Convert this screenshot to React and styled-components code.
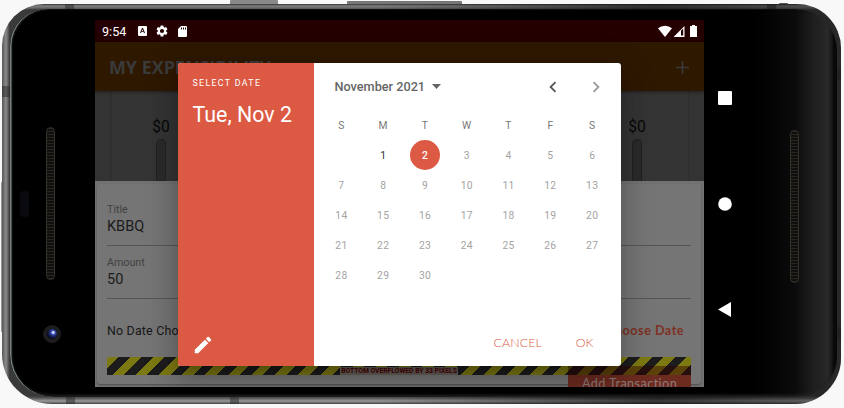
import React from "react";
import styled, { createGlobalStyle } from "styled-components";

const Global = createGlobalStyle`
  * { box-sizing: border-box; }
  html, body { margin: 0; padding: 0; background: #f8f8f8; }
  body { font-family: Roboto, "Liberation Sans", sans-serif; overflow: hidden; }
`;

const Stage = styled.div`
  position: relative;
  width: 844px;
  height: 408px;
  padding: 4px 3px 4px 2px;
  background: #f8f8f8;
  overflow: hidden;
`;

const SideKey = styled.span`
  position: absolute;
  left: ${(p) => p.$x}px;
  top: ${(p) => p.$y}px;
  width: ${(p) => p.$w}px;
  height: ${(p) => p.$h}px;
  border-radius: 1px;
  background: ${(p) => p.$tone};
`;

const Casing = styled.div`
  position: relative;
  width: 839px;
  height: 400px;
  padding: 5px 4px 7px 8px;
  border-radius: 42px 44px 46px 50px;
  background:
    linear-gradient(90deg, #555 0, #8c8c8c 4px, #333 8px, transparent 9px),
    linear-gradient(180deg, #333 0, #808080 2px, #666 4px, transparent 6px),
    linear-gradient(0deg, #444 0, #999 3px, #555 6px, transparent 8px),
    #3a3a3a;
  &::after {
    content: "";
    position: absolute;
    inset: 0;
    border-radius: inherit;
    background: linear-gradient(90deg, transparent 45%, rgba(0, 0, 0, 0.62) 78%, rgba(0, 0, 0, 0.3) 100%);
    z-index: 0;
  }
`;

const AntennaBand = styled.span`
  position: absolute;
  left: ${(p) => p.$x}px;
  top: ${(p) => p.$y}px;
  width: ${(p) => p.$w}px;
  height: ${(p) => p.$h}px;
  background: rgba(40, 40, 40, 0.5);
`;

const Glass = styled.div`
  position: relative;
  z-index: 1;
  display: flex;
  align-items: flex-start;
  width: 827px;
  height: 388px;
  padding-top: 11px;
  border-radius: 37px 42px 40px 42px;
  background: linear-gradient(90deg, transparent 745px, #0b0b0b 785px, #1b1b1b 800px, #292929 818px, #171717 822px, #080808 824px), #000;
  box-shadow: inset 1.5px 0 0 #75807f, inset 3px 1px 1px #111, inset 0 -4px 3px -2px #222;
`;

const LeftBezel = styled.div`
  position: relative;
  flex: none;
  width: 85px;
  height: 367px;
`;

const Speaker = styled.span`
  position: absolute;
  left: ${(p) => p.$x}px;
  top: ${(p) => p.$y}px;
  width: 9px;
  height: 153px;
  border: 1px solid #34312c;
  border-radius: 5px;
  background: repeating-linear-gradient(180deg, #29251f 0 1px, #100f0d 1px 3px);
`;

const Sensor = styled.span`
  position: absolute;
  left: 10px;
  top: 171px;
  width: 9px;
  height: 26px;
  border-radius: 4px;
  background: #090a10;
`;

const Camera = styled.span`
  position: absolute;
  left: 33px;
  top: 305px;
  width: 18px;
  height: 18px;
  border: 4px solid #1d1d1f;
  border-radius: 50%;
  background: radial-gradient(circle at 62% 35%, #cfd6ff 0 1px, #3d50b5 2px, #1b2560 4px, #080b22 6px);
`;

const Screen = styled.div`
  position: relative;
  flex: none;
  display: flex;
  flex-direction: column;
  width: 609px;
  height: 367px;
  overflow: hidden;
  background: #333;
`;

const StatusBar = styled.div`
  flex: none;
  display: flex;
  align-items: center;
  justify-content: space-between;
  height: 22px;
  padding: 0 7px 0 7px;
  background: #240000;
  color: #fff;
  font-size: 12.6px;
`;

const StatusGroup = styled.div`
  display: flex;
  align-items: center;
  gap: ${(p) => p.$gap}px;
`;

const Clock = styled.span`
  width: 27px;
`;

const AppBar = styled.div`
  flex: none;
  position: relative;
  display: flex;
  align-items: center;
  justify-content: space-between;
  height: 49px;
  padding: 1px 15px 0 14px;
  background: #2e1800;
  color: #3b3a3a;
  box-shadow: 0 1px 3px rgba(0, 0, 0, 0.45);
  z-index: 1;
`;

const AppTitle = styled.h1`
  margin: 0;
  font: 700 17.9px "Open Sans", sans-serif;
  white-space: nowrap;
`;

const Chart = styled.div`
  flex: none;
  display: flex;
  justify-content: space-between;
  height: 90px;
  margin: 0 15px;
  padding: 27px 29px 0 27px;
  border-left: 2px solid #2f2f2f;
  border-right: 1px solid #2e2e2e;
  background: #343434;
`;

const ChartDay = styled.div`
  display: flex;
  flex-direction: column;
  align-items: center;
  width: 44px;
  color: #080808;
  font-size: 15.6px;
  line-height: 19px;
`;

const ChartTrack = styled.span`
  width: 10px;
  height: 60px;
  margin-top: 2px;
  border: 1px solid #202020;
  border-bottom: 0;
  border-radius: 5px 5px 0 0;
  background: #2a2a2a;
`;

const Sheet = styled.div`
  flex: none;
  height: 206px;
  padding: 3px 3px 3px 2px;
  background: #727272;
`;

const FormCard = styled.div`
  height: 200px;
  padding: 18px 10px 0;
  border-radius: 3px;
  background: #757575;
  box-shadow: 0 1px 2px rgba(0, 0, 0, 0.35);
`;

const Field = styled.div`
  height: ${(p) => p.$height}px;
  padding-top: ${(p) => p.$top}px;
  border-bottom: 1px solid #555;
`;

const Label = styled.div`
  color: #414141;
  font-size: 10.7px;
  line-height: 15px;
`;

const Value = styled.div`
  color: #1b1b1b;
  font-size: 14.5px;
  line-height: 20px;
`;

const DateRow = styled.div`
  display: flex;
  align-items: center;
  justify-content: space-between;
  height: 58px;
  padding: 4px 7px 0 0;
  color: #171717;
  font-size: 12.4px;
  letter-spacing: 0.2px;
`;

const ChooseDate = styled.span`
  color: #7e3023;
  font: 700 12.6px Lato, sans-serif;
  letter-spacing: 0.5px;
`;

const Overflow = styled.div`
  position: relative;
  z-index: 2;
  display: flex;
  align-items: flex-end;
  justify-content: center;
  height: 18px;
  border-radius: 2px 0 0 0;
  background:
    linear-gradient(rgba(50, 0, 0, 0.45), rgba(50, 0, 0, 0.45)) right bottom / 123px 9px no-repeat,
    repeating-linear-gradient(135deg, #7c7812 0 8.2px, #1c1c1c 8.2px 16.4px);
`;

const OverflowText = styled.span`
  padding: 0 1px;
  background: #66605a;
  color: #480303;
  font-size: 6.75px;
  font-weight: 700;
  line-height: 8px;
  white-space: nowrap;
`;

const AddButton = styled.div`
  width: 123px;
  height: 12px;
  margin-left: auto;
  background: #6d2b20;
  color: #8c7a77;
  font: 400 12.7px/16px Lato, sans-serif;
  letter-spacing: 0.4px;
  text-align: center;
`;

const Dialog = styled.div`
  position: absolute;
  z-index: 5;
  left: 83px;
  top: 43px;
  display: flex;
  width: 442.5px;
  height: 303px;
  border-radius: 3px;
  overflow: hidden;
  background: #fff;
`;

const DialogShadow = styled.div`
  position: absolute;
  z-index: 4;
  left: 83px;
  top: 43px;
  width: 442px;
  height: 303px;
  border-radius: 3px;
  box-shadow: 0 8px 11px -5px rgba(0, 0, 0, 0.2), 0 17px 27px 2px rgba(0, 0, 0, 0.14), 0 6px 33px 6px rgba(0, 0, 0, 0.12);
`;

const DatePanel = styled.div`
  flex: none;
  display: flex;
  flex-direction: column;
  width: 136px;
  padding: 14px 14px 10px 14.5px;
  background: #dc5a44;
  color: #fff;
`;

const PanelLabel = styled.div`
  font-size: 8.8px;
  line-height: 12px;
  letter-spacing: 1.35px;
`;

const PanelDate = styled.div`
  margin-top: 11px;
  font-size: 21.4px;
  line-height: 30px;
  white-space: nowrap;
`;

const PanelEdit = styled.div`
  display: flex;
  margin: auto 0 0 -1px;
`;

const Picker = styled.div`
  flex: 1;
  display: flex;
  flex-direction: column;
  padding: 5px 7px 0 6.5px;
`;

const MonthBar = styled.div`
  display: flex;
  align-items: center;
  height: 37px;
  padding: 0 7px 0 14px;
  color: #666;
`;

const Month = styled.span`
  flex: 1;
  display: flex;
  align-items: center;
  gap: 7px;
  font-size: 12.7px;
  font-weight: 500;
  white-space: nowrap;
`;

const Arrows = styled.span`
  display: flex;
  gap: 21px;
`;

const Calendar = styled.div`
  display: grid;
  grid-template-columns: repeat(7, 41.8px);
  grid-auto-rows: 30px;
  margin-top: 5px;
`;

const Day = styled.span`
  display: flex;
  align-items: center;
  justify-content: center;
  justify-self: center;
  width: 30px;
  height: 30px;
  border-radius: 50%;
  font-size: 10.3px;
  letter-spacing: 0.3px;
  background: ${(p) => (p.$kind === "selected" ? "#dc5a44" : "transparent")};
  color: ${(p) => ({ head: "#777", selected: "#fff", today: "#333", off: "#a3a3a3" })[p.$kind]};
  font-weight: ${(p) => (p.$kind === "selected" ? 500 : 400)};
`;

const Actions = styled.div`
  display: flex;
  justify-content: flex-end;
  gap: 34px;
  margin-top: auto;
  padding: 0 20px 15px 0;
  color: #dc5a44;
  font: 300 12.4px/16px Lato, sans-serif;
`;

const Action = styled.span`
  letter-spacing: ${(p) => p.$spacing}px;
`;

const NavColumn = styled.div`
  display: flex;
  flex-direction: column;
  align-items: center;
  justify-content: space-between;
  width: 42px;
  height: 300px;
  padding: 71px 0 3px;
  color: #fff;
`;

const Svg = styled.svg`
  display: block;
  flex: none;
  fill: ${(p) => p.$tone || "currentColor"};
`;

const Icon = ({ w, h = w, box = "0 0 24 24", tone, children }) => (
  <Svg width={w} height={h} viewBox={box} $tone={tone}>{children}</Svg>
);

const gear = "M19.14 12.94c.04-.3.06-.61.06-.94 0-.32-.02-.64-.07-.94l2.03-1.58a.49.49 0 0 0 .12-.61l-1.92-3.32a.49.49 0 0 0-.59-.22l-2.39.96c-.5-.38-1.03-.7-1.62-.94L14.4 2.81a.48.48 0 0 0-.48-.41h-3.84a.48.48 0 0 0-.47.41L9.25 5.35c-.59.24-1.13.57-1.62.94l-2.39-.96a.49.49 0 0 0-.59.22L2.74 8.87a.48.48 0 0 0 .12.61l2.03 1.58c-.05.3-.09.63-.09.94s.02.64.07.94l-2.03 1.58a.49.49 0 0 0-.12.61l1.92 3.32c.12.22.37.29.59.22l2.39-.96c.5.38 1.03.7 1.62.94l.36 2.54c.05.24.24.41.48.41h3.84c.24 0 .44-.17.47-.41l.36-2.54c.59-.24 1.13-.56 1.62-.94l2.39.96c.22.08.47 0 .59-.22l1.92-3.32a.48.48 0 0 0-.12-.61zM12 15.6a3.6 3.6 0 1 1 0-7.2 3.6 3.6 0 0 1 0 7.2z";

const week = ["S", "M", "T", "W", "T", "F", "S"];
const days = Array.from({ length: 30 }, (_, i) => i + 1);
const kindOf = (d) => (d === 1 ? "today" : d === 2 ? "selected" : "off");

export default function App() {
  return (
    <Stage>
      <Global />
      <SideKey $x={230} $y={0} $w={48} $h={5} $tone="#888" />
      <SideKey $x={347} $y={1} $w={115} $h={5} $tone="#777" />
      <SideKey $x={779} $y={3} $w={9} $h={3} $tone="#555" />
      <SideKey $x={1} $y={182} $w={3} $h={150} $tone="#999" />
      <Casing>
        <AntennaBand $x={63} $y={0} $w={9} $h={6} />
        <AntennaBand $x={765} $y={0} $w={9} $h={6} />
        <AntennaBand $x={64} $y={393} $w={9} $h={7} />
        <AntennaBand $x={228} $y={393} $w={9} $h={7} />
        <AntennaBand $x={0} $y={82} $w={8} $h={11} />
        <AntennaBand $x={835} $y={64} $w={4} $h={12} />
        <AntennaBand $x={835} $y={323} $w={4} $h={12} />
        <Glass>
          <LeftBezel>
            <Sensor />
            <Speaker $x={36} $y={107} />
            <Camera />
          </LeftBezel>
          <Screen>
            <StatusBar>
              <StatusGroup $gap={8.5}>
                <Clock>9:54</Clock>
                <Icon w={9} h={10} box="0 0 9 10">
                  <path fillRule="evenodd" d="M1 0h7a1 1 0 0 1 1 1v8a1 1 0 0 1-1 1H1a1 1 0 0 1-1-1V1a1 1 0 0 1 1-1zM4 2 2 7h1l.5-1.2h2L6 7h1L5 2zm.5 1.2L5.2 5H3.8z" />
                </Icon>
                <Icon w={14}><path fillRule="evenodd" d={gear} /></Icon>
                <Icon w={9} h={11} box="0 0 9 11">
                  <path fillRule="evenodd" d="M3 0h5a1 1 0 0 1 1 1v9a1 1 0 0 1-1 1H1a1 1 0 0 1-1-1V3zm0 1.5v2h1v-2zm2 0v2h1v-2zm2 0v2h1v-2z" />
                </Icon>
              </StatusGroup>
              <StatusGroup $gap={1}>
                <Icon w={14} h={12} box="0 0 13 11"><path d="M6.5 11 0 3a10 10 0 0 1 13 0z" /></Icon>
                <Icon w={12} h={11} box="0 0 11 11"><path fillRule="evenodd" d="M11 0v11H0zM7.5 4.8v4.8h2.2V2.6z" /></Icon>
                <Icon w={11} h={12} box="0 0 11 12"><path d="M6 0h3v1h2v11H4V1h2z" /></Icon>
              </StatusGroup>
            </StatusBar>
            <AppBar>
              <AppTitle>MY EXPENSIBILITY</AppTitle>
              <Icon w={13} box="0 0 13 13"><path d="M5.7 0h1.6v5.7H13v1.6H7.3V13H5.7V7.3H0V5.7h5.7z" /></Icon>
            </AppBar>
            <Chart>
              <ChartDay>$0<ChartTrack /></ChartDay>
              <ChartDay>$0<ChartTrack /></ChartDay>
            </Chart>
            <Sheet>
              <FormCard>
                <Field $height={44} $top={0}><Label>Title</Label><Value>KBBQ</Value></Field>
                <Field $height={53} $top={9}><Label>Amount</Label><Value>50</Value></Field>
                <DateRow>
                  <span>No Date Chosen!</span>
                  <ChooseDate>Choose Date</ChooseDate>
                </DateRow>
                <Overflow><OverflowText>BOTTOM OVERFLOWED BY 33 PIXELS</OverflowText></Overflow>
                <AddButton>Add Transaction</AddButton>
              </FormCard>
            </Sheet>
            <DialogShadow />
            <Dialog>
              <DatePanel>
                <PanelLabel>SELECT DATE</PanelLabel>
                <PanelDate>Tue, Nov 2</PanelDate>
                <PanelEdit>
                  <Icon w={22}><path d="M3 17.25V21h3.75L17.81 9.94l-3.75-3.75zM20.71 7.04a1 1 0 0 0 0-1.41l-2.34-2.34a1 1 0 0 0-1.41 0l-1.83 1.83 3.75 3.75z" /></Icon>
                </PanelEdit>
              </DatePanel>
              <Picker>
                <MonthBar>
                  <Month>
                    November 2021
                    <Icon w={9} h={5} box="0 0 9 5"><path d="M0 0h9L4.5 5z" /></Icon>
                  </Month>
                  <Arrows>
                    <Icon w={22} tone="#555"><path d="M15.41 7.41 14 6l-6 6 6 6 1.41-1.41L10.83 12z" /></Icon>
                    <Icon w={22} tone="#999"><path d="M8.59 16.59 13.17 12 8.59 7.41 10 6l6 6-6 6z" /></Icon>
                  </Arrows>
                </MonthBar>
                <Calendar>
                  {week.map((d, i) => <Day key={"h" + i} $kind="head">{d}</Day>)}
                  <Day $kind="head" />
                  {days.map((d) => <Day key={d} $kind={kindOf(d)}>{d}</Day>)}
                </Calendar>
                <Actions>
                  <Action $spacing={0.1}>CANCEL</Action>
                  <Action $spacing={0}>OK</Action>
                </Actions>
              </Picker>
            </Dialog>
          </Screen>
          <NavColumn>
            <Icon w={14} box="0 0 14 14"><rect width="14" height="14" rx="1" /></Icon>
            <Icon w={14} box="0 0 14 14"><circle cx="7" cy="7" r="6.8" /></Icon>
            <Icon w={14} h={15} box="0 0 14 15"><path d="M13 0v15L0 7.5z" /></Icon>
          </NavColumn>
          <Speaker $x={780} $y={121} />
        </Glass>
      </Casing>
    </Stage>
  );
}
